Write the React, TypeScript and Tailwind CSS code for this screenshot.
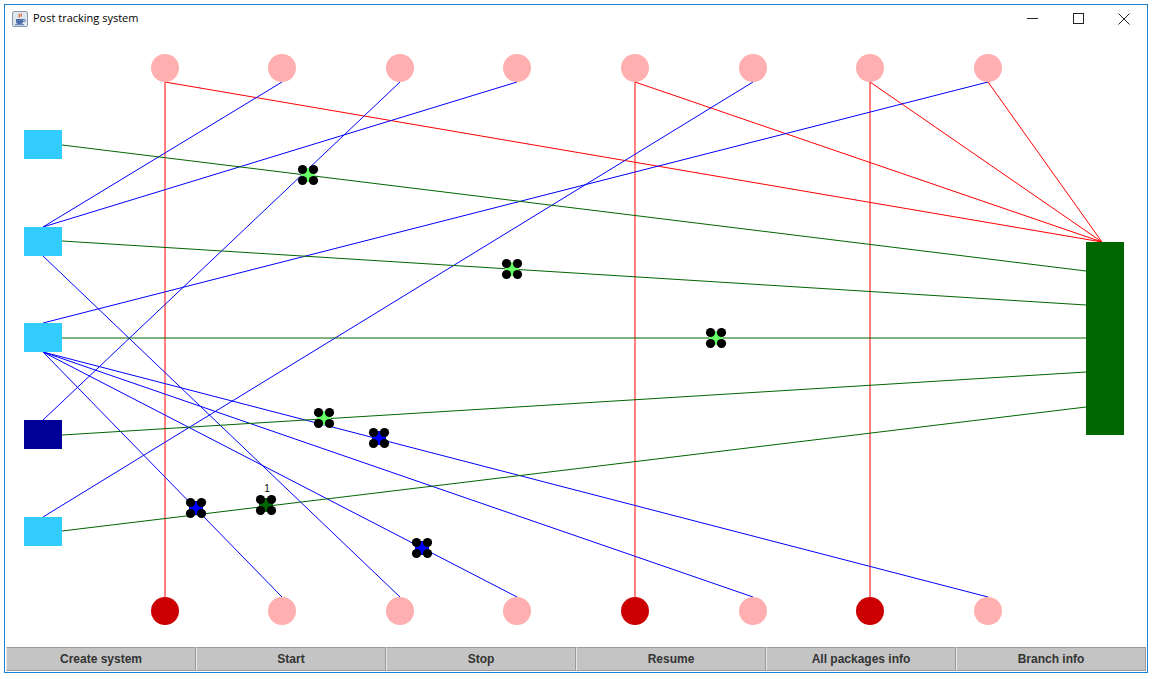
import React from 'react';

type Seg = [number, number, number, number];

// Canvas coordinates are page coordinates (viewBox starts at the canvas' page offset)
const redLines: Seg[] = [
  [165, 82, 165, 597],
  [635, 82, 635, 597],
  [870, 82, 870, 597],
  [165, 82, 1102, 242],
  [635, 82, 1102, 242],
  [870, 82, 1102, 242],
  [988, 82, 1102, 242],
];

const blueLines: Seg[] = [
  [43, 227, 282, 82],
  [43, 227, 517, 82],
  [43, 420, 400, 82],
  [43, 323, 988, 82],
  [43, 517, 753, 82],
  [43, 256, 400, 597],
  [43, 352, 282, 597],
  [43, 352, 517, 597],
  [43, 352, 753, 597],
  [43, 352, 988, 597],
];

const greenLines: Seg[] = [
  [62, 145, 1086, 271],
  [62, 241, 1086, 305],
  [62, 338, 1086, 338],
  [62, 435, 1086, 372],
  [62, 531, 1086, 407],
];

const hubX = [165, 282, 400, 517, 635, 753, 870, 988];
const darkBottom = [165, 635, 870];

const branches = [
  { y: 130, color: '#33ccff' },
  { y: 227, color: '#33ccff' },
  { y: 323, color: '#33ccff' },
  { y: 420, color: '#000099' },
  { y: 517, color: '#33ccff' },
];

const vehicles = [
  { x: 308, y: 175, color: '#66ff66' },
  { x: 512, y: 269, color: '#66ff66' },
  { x: 716, y: 338, color: '#66ff66' },
  { x: 324, y: 418, color: '#66ff66' },
  { x: 266, y: 505, color: '#006600', label: '1' },
  { x: 196, y: 508, color: '#0000ff' },
  { x: 379, y: 438, color: '#0000ff' },
  { x: 422, y: 548, color: '#0000ff' },
];

const buttons = ['Create system', 'Start', 'Stop', 'Resume', 'All packages info', 'Branch info'];

function Vehicle({ x, y, color, label }: { x: number; y: number; color: string; label?: string }) {
  const d = 5.5;
  return (
    <g>
      <rect x={x - 7} y={y - 7} width={14} height={14} fill={color} />
      <circle cx={x - d} cy={y - d} r={4.6} fill="#000" />
      <circle cx={x + d} cy={y - d} r={4.6} fill="#000" />
      <circle cx={x - d} cy={y + d} r={4.6} fill="#000" />
      <circle cx={x + d} cy={y + d} r={4.6} fill="#000" />
      {label && (
        <text x={x + 1} y={y - 13} fontSize={10} textAnchor="middle" fill="#000" fontFamily="'Liberation Sans', Arial, sans-serif">
          {label}
        </text>
      )}
    </g>
  );
}

function JavaIcon() {
  return (
    <svg width="16" height="16" viewBox="0 0 16 16">
      <rect x="0.5" y="0.5" width="15" height="15" rx="1.5" fill="#dfe6ee" stroke="#8a9bb0" />
      <path d="M7 3c1.5 1-1 2 0.5 3.5M9 2.5c1.2 1-0.8 2 0.5 3" stroke="#e2531f" strokeWidth="1.1" fill="none" />
      <path d="M4 8h7v2.5a2.5 2.5 0 0 1-2.5 2.5h-2a2.5 2.5 0 0 1-2.5-2.5z" fill="#4b6fa8" />
      <path d="M11 8.5h1.3a1 1 0 0 1 0 2H11" stroke="#4b6fa8" fill="none" />
      <rect x="3" y="13.2" width="9" height="1" fill="#4b6fa8" />
    </svg>
  );
}

export default function App() {
  return (
    <div className="w-[1153px] h-[679px] bg-white pl-[4px] pt-[4px]">
      <div className="w-[1144px] h-[669px] border border-[#1883d7] flex flex-col bg-white">
        {/* Title bar */}
        <div className="h-[27px] flex items-center pl-[7px] shrink-0">
          <JavaIcon />
          <span className="ml-[5px] text-[11px] text-black" style={{ fontFamily: "'Open Sans', 'Noto Sans', sans-serif" }}>
            Post tracking system
          </span>
          <div className="ml-auto flex items-center h-full">
            <div className="w-[46px] h-full flex items-center justify-center">
              <svg width="11" height="11" viewBox="0 0 11 11">
                <line x1="0" y1="5.5" x2="11" y2="5.5" stroke="#222" strokeWidth="1" />
              </svg>
            </div>
            <div className="w-[46px] h-full flex items-center justify-center">
              <svg width="11" height="11" viewBox="0 0 11 11">
                <rect x="0.5" y="0.5" width="10" height="10" fill="none" stroke="#222" strokeWidth="1" />
              </svg>
            </div>
            <div className="w-[46px] h-full flex items-center justify-center">
              <svg width="12" height="12" viewBox="0 0 12 12">
                <path d="M0.5 0.5L11.5 11.5M11.5 0.5L0.5 11.5" stroke="#222" strokeWidth="1" />
              </svg>
            </div>
          </div>
        </div>

        {/* Drawing canvas */}
        <svg width="1142" height="614" viewBox="5 32 1142 614" className="block shrink-0 bg-white">
          {redLines.map(([a, b, c, d], i) => (
            <line key={'r' + i} x1={a} y1={b} x2={c} y2={d} stroke="#ff0000" strokeWidth={1} />
          ))}
          {blueLines.map(([a, b, c, d], i) => (
            <line key={'b' + i} x1={a} y1={b} x2={c} y2={d} stroke="#0000ff" strokeWidth={1} />
          ))}
          {greenLines.map(([a, b, c, d], i) => (
            <line key={'g' + i} x1={a} y1={b} x2={c} y2={d} stroke="#006600" strokeWidth={1} />
          ))}
          {hubX.map((x) => (
            <circle key={'t' + x} cx={x} cy={68} r={14} fill="#ffafaf" />
          ))}
          {hubX.map((x) => (
            <circle key={'d' + x} cx={x} cy={611} r={14} fill={darkBottom.includes(x) ? '#cc0000' : '#ffafaf'} />
          ))}
          {branches.map((b, i) => (
            <rect key={'s' + i} x={24} y={b.y} width={38} height={29} fill={b.color} />
          ))}
          <rect x={1086} y={242} width={38} height={193} fill="#006600" />
          {vehicles.map((v, i) => (
            <Vehicle key={'v' + i} {...v} />
          ))}
        </svg>

        {/* Button row */}
        <div className="flex-1 grid grid-cols-6 px-[1px] pt-[1px] pb-[1px]">
          {buttons.map((b) => (
            <button
              key={b}
              className="bg-[#c4c4c4] border border-[#9a9a9a] border-l-[#e6e6e6] text-[12px] font-bold text-[#333]"
              style={{ fontFamily: "'Liberation Sans', Arial, sans-serif" }}
            >
              {b}
            </button>
          ))}
        </div>
      </div>
    </div>
  );
}
